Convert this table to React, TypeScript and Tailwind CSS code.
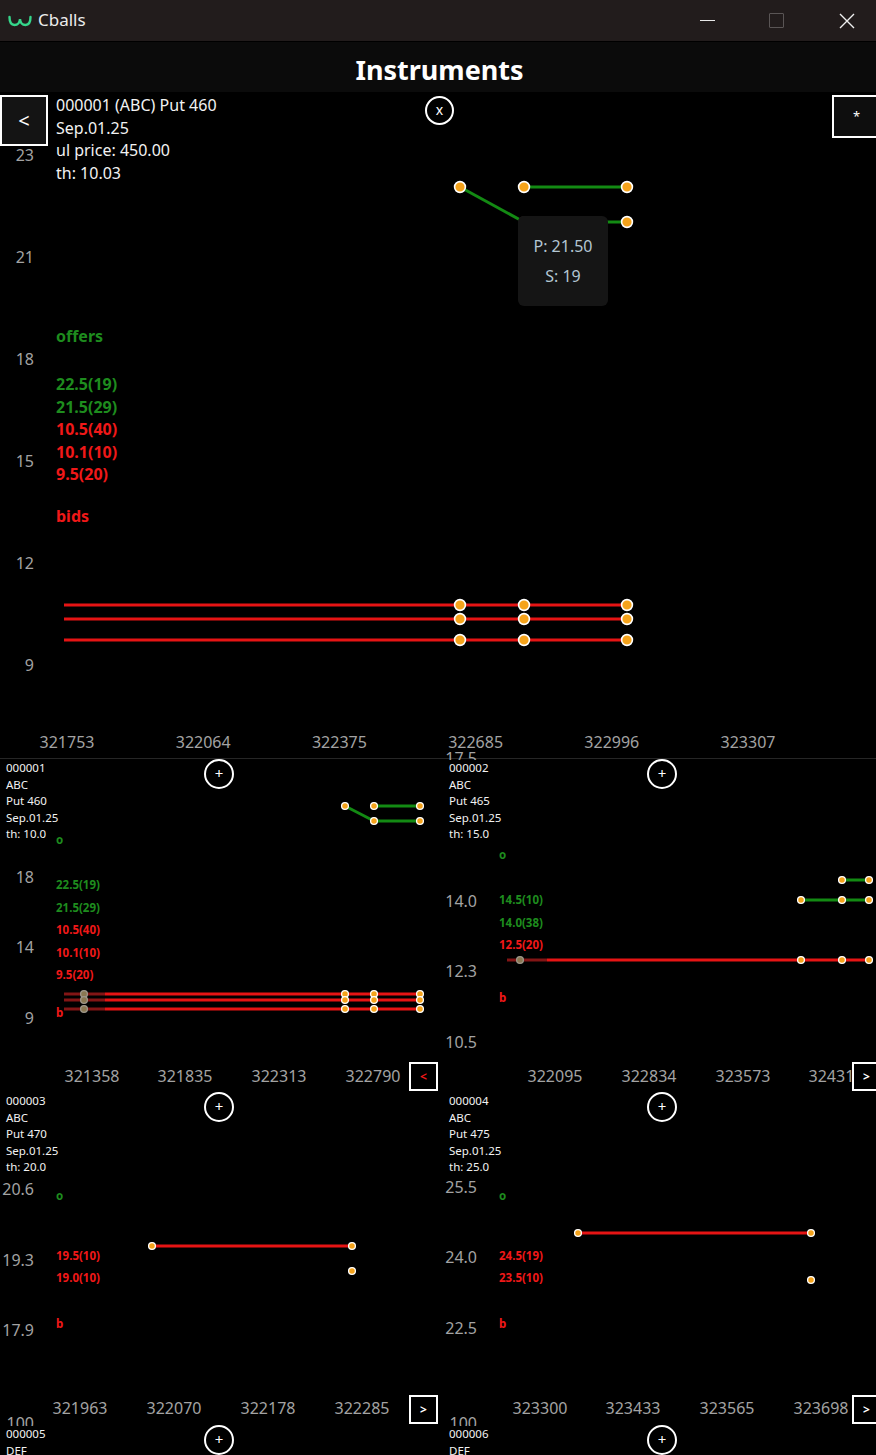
import React from 'react';

type Pt = [number, number];
type Seg = { a: Pt; b: Pt; c: string };
type Txt = { t: string; x: number; y: number; c?: string };

const GREEN_LINE = '#138a13';
const RED_LINE = '#e61414';
const DIM_LINE = '#821515';
const GREEN_TXT = '#1e8c1e';
const RED_TXT = '#f01818';
const AXIS = '#a3a3a3';

interface MiniData {
  info: string[];
  yLabels: Txt[];
  xLabels: Txt[];
  quotes: Txt[];
  segs: Seg[];
  dots: Pt[];
  dimDots?: Pt[];
  nav?: { t: string; red?: boolean };
}

const Dot: React.FC<{ p: Pt; r?: number; dim?: boolean }> = ({ p, r = 3.4, dim }) => (
  <circle
    cx={p[0]}
    cy={p[1]}
    r={r}
    fill={dim ? '#8a7852' : '#f5a31b'}
    stroke={dim ? '#9d978a' : '#ffffff'}
    strokeWidth={r > 4 ? 1.6 : 1.3}
  />
);

const Lines: React.FC<{ segs: Seg[]; w?: number }> = ({ segs, w = 3 }) => (
  <>
    {segs.map((s, i) => (
      <line key={i} x1={s.a[0]} y1={s.a[1]} x2={s.b[0]} y2={s.b[1]} stroke={s.c} strokeWidth={w} />
    ))}
  </>
);

const AxisText: React.FC<{ l: Txt; anchor: 'end' | 'middle' }> = ({ l, anchor }) => (
  <text x={l.x} y={l.y} textAnchor={anchor} dominantBaseline="central" fill={AXIS} fontSize="16">
    {l.t}
  </text>
);

const TitleBar: React.FC = () => (
  <div className="h-[42px] bg-[#221c1c] flex items-center border-b border-black">
    <svg width="24" height="14" viewBox="0 0 24 14" className="ml-[8px]">
      <path
        d="M1.5 3 Q1.5 11 6.5 11 Q11.5 11 12 5 Q12.5 11 17.5 11 Q22.5 11 22.5 3"
        fill="none"
        stroke="#35d68a"
        strokeWidth="2.4"
        strokeLinecap="round"
      />
    </svg>
    <span className="ml-[6px] text-[17px] text-[#ececec] leading-none pb-[2px]">Cballs</span>
    <div className="ml-auto flex items-center pr-[21px]">
      <div className="w-[15px] h-[1.5px] bg-[#e8e8e8]" />
      <div className="ml-[54px] w-[15px] h-[15px] border border-[#5a5555] rounded-[1px]" />
      <svg width="16" height="16" viewBox="0 0 16 16" className="ml-[55px]">
        <path d="M1 1 L15 15 M15 1 L1 15" stroke="#f0f0f0" strokeWidth="1.4" />
      </svg>
    </div>
  </div>
);

const MainChart: React.FC = () => {
  const yLabels: Txt[] = [
    { t: '23', x: 34, y: 63 },
    { t: '21', x: 34, y: 165 },
    { t: '18', x: 34, y: 267 },
    { t: '15', x: 34, y: 369 },
    { t: '12', x: 34, y: 471 },
    { t: '9', x: 34, y: 573 },
  ];
  const xLabels: Txt[] = ['321753', '322064', '322375', '322685', '322996', '323307'].map((t, i) => ({
    t,
    x: 67 + i * 136.2,
    y: 650,
  }));
  const quotes: Txt[] = [
    { t: 'offers', x: 56, y: 244, c: GREEN_TXT },
    { t: '22.5(19)', x: 56, y: 292, c: GREEN_TXT },
    { t: '21.5(29)', x: 56, y: 315, c: GREEN_TXT },
    { t: '10.5(40)', x: 56, y: 337, c: RED_TXT },
    { t: '10.1(10)', x: 56, y: 360, c: RED_TXT },
    { t: '9.5(20)', x: 56, y: 382, c: RED_TXT },
    { t: 'bids', x: 56, y: 424, c: RED_TXT },
  ];
  const redY = [513, 527, 548];
  const segs: Seg[] = [
    { a: [460, 95], b: [524, 130], c: GREEN_LINE },
    { a: [524, 95], b: [627, 95], c: GREEN_LINE },
    { a: [524, 130], b: [627, 130], c: GREEN_LINE },
    ...redY.map((y) => ({ a: [64, y] as Pt, b: [627, y] as Pt, c: RED_LINE })),
  ];
  const dots: Pt[] = [
    [460, 95],
    [524, 95],
    [627, 95],
    [627, 130],
    ...redY.flatMap((y) => [[460, y], [524, y], [627, y]] as Pt[]),
  ];

  return (
    <div className="relative h-[666px] bg-black overflow-hidden">
      <svg width="876" height="666" className="absolute left-0 top-0">
        {yLabels.map((l) => (
          <AxisText key={l.t} l={l} anchor="end" />
        ))}
        {xLabels.map((l) => (
          <AxisText key={l.t} l={l} anchor="middle" />
        ))}
        {quotes.map((q) => (
          <text key={q.t} x={q.x} y={q.y} dominantBaseline="central" fill={q.c} fontSize="16" fontWeight="700">
            {q.t}
          </text>
        ))}
        <Lines segs={segs} />
        {dots.map((p, i) => (
          <Dot key={i} p={p} r={5.4} />
        ))}
        <circle cx={524} cy={130} r={6} fill="#29241f" />
      </svg>

      {/* top controls row */}
      <div className="relative w-[880px] flex items-start">
        <button className="mt-[3px] w-[48px] h-[51px] border-2 border-white bg-[#141414] text-white text-[20px] flex items-center justify-center">
          &lt;
        </button>
        <div className="ml-[8px] w-[369px] pt-[2px] text-[16px] leading-[22.7px] text-[#f2f2f2]">
          <div>000001 (ABC) Put 460</div>
          <div>Sep.01.25</div>
          <div>ul price: 450.00</div>
          <div>th: 10.03</div>
        </div>
        <button className="mt-[4px] w-[29px] h-[29px] rounded-full border-2 border-white bg-black text-white text-[14px] leading-none flex items-center justify-center pb-[2px]">
          x
        </button>
        <button className="ml-auto mt-[3px] w-[48px] h-[43px] border-2 border-white bg-[#0e0e0e] text-white text-[13px] flex items-start pl-[19px] pt-[10px]">
          *
        </button>
      </div>

      {/* tooltip */}
      <div className="absolute left-[518px] top-[124px] w-[90px] h-[90px] rounded-[6px] bg-[#151515] text-[#b3c6d3] text-[16px] leading-[30px] pt-[15px] flex flex-col items-center">
        <div>P: 21.50</div>
        <div>S: 19</div>
      </div>
    </div>
  );
};

const MiniChart: React.FC<{ d: MiniData }> = ({ d }) => (
  <div className="relative h-[333px]">
    <svg width="438" height="333" className="absolute left-0 top-0 overflow-visible">
      {d.yLabels.map((l) => (
        <AxisText key={l.t} l={l} anchor="end" />
      ))}
      {/* labels at the very top sit under the info block */}
      <rect x={0} y={1} width={60} height={86} fill="#000" />
      {d.xLabels.map((l) => (
        <AxisText key={l.t} l={l} anchor="middle" />
      ))}
      {d.quotes.map((q, i) => (
        <text key={i} x={q.x} y={q.y} dominantBaseline="central" fill={q.c} fontSize="11.5" fontWeight="700">
          {q.t}
        </text>
      ))}
      <Lines segs={d.segs} />
      {d.dimDots?.map((p, i) => (
        <Dot key={'d' + i} p={p} dim />
      ))}
      {d.dots.map((p, i) => (
        <Dot key={i} p={p} />
      ))}
    </svg>

    <div className="relative h-full flex flex-col">
      <div className="flex items-start">
        <div className="w-[204px] pl-[6px] pt-[1px] text-[11.5px] leading-[16.5px] text-[#f2f2f2]">
          {d.info.map((line) => (
            <div key={line}>{line}</div>
          ))}
        </div>
        <button className="w-[30px] h-[30px] rounded-full border-2 border-white bg-black text-white text-[15px] leading-none flex items-center justify-center pb-[1px]">
          +
        </button>
      </div>
      {d.nav && (
        <button
          className={`mt-auto mb-[1px] self-end w-[29px] h-[29px] border-2 border-white bg-black text-[12px] font-bold flex items-center justify-center ${
            d.nav.red ? 'text-[#f01818]' : 'text-white'
          }`}
        >
          {d.nav.t}
        </button>
      )}
    </div>
  </div>
);

const xs = (labels: [string, number][], y: number): Txt[] => labels.map(([t, x]) => ({ t, x, y }));
const ys = (labels: [string, number][]): Txt[] => labels.map(([t, y]) => ({ t, x: 34, y }));
const qs = (labels: [string, number, string][]): Txt[] => labels.map(([t, y, c]) => ({ t, x: 56, y, c }));

const cells: MiniData[] = [
  {
    info: ['000001', 'ABC', 'Put 460', 'Sep.01.25', 'th: 10.0'],
    yLabels: ys([
      ['18', 118],
      ['14', 188],
      ['9', 259],
    ]),
    xLabels: xs(
      [
        ['321358', 92],
        ['321835', 185],
        ['322313', 279],
        ['322790', 373],
      ],
      317,
    ),
    quotes: qs([
      ['o', 80, GREEN_TXT],
      ['22.5(19)', 125, GREEN_TXT],
      ['21.5(29)', 148, GREEN_TXT],
      ['10.5(40)', 170, RED_TXT],
      ['10.1(10)', 193, RED_TXT],
      ['9.5(20)', 215, RED_TXT],
      ['b', 253, RED_TXT],
    ]),
    segs: [
      { a: [345, 47], b: [374, 62], c: GREEN_LINE },
      { a: [374, 47], b: [420, 47], c: GREEN_LINE },
      { a: [374, 62], b: [420, 62], c: GREEN_LINE },
      ...[235, 241, 250].flatMap((y) => [
        { a: [105, y] as Pt, b: [420, y] as Pt, c: RED_LINE },
        { a: [64, y] as Pt, b: [105, y] as Pt, c: DIM_LINE },
      ]),
    ],
    dots: [
      [345, 47],
      [374, 47],
      [420, 47],
      [374, 62],
      [420, 62],
      ...[235, 241, 250].flatMap((y) => [[345, y], [374, y], [420, y]] as Pt[]),
    ],
    dimDots: [
      [84, 235],
      [84, 241],
      [84, 250],
    ],
    nav: { t: '<', red: true },
  },
  {
    info: ['000002', 'ABC', 'Put 465', 'Sep.01.25', 'th: 15.0'],
    yLabels: ys([
      ['17.5', -1],
      ['14.0', 142],
      ['12.3', 212],
      ['10.5', 283],
    ]),
    xLabels: xs(
      [
        ['322095', 112],
        ['322834', 206],
        ['323573', 300],
        ['324312', 393],
      ],
      317,
    ),
    quotes: qs([
      ['o', 95, GREEN_TXT],
      ['14.5(10)', 140, GREEN_TXT],
      ['14.0(38)', 163, GREEN_TXT],
      ['12.5(20)', 185, RED_TXT],
      ['b', 238, RED_TXT],
    ]),
    segs: [
      { a: [399, 121], b: [426, 121], c: GREEN_LINE },
      { a: [358, 141], b: [426, 141], c: GREEN_LINE },
      { a: [104, 201], b: [426, 201], c: RED_LINE },
      { a: [64, 201], b: [104, 201], c: DIM_LINE },
    ],
    dots: [
      [399, 121],
      [426, 121],
      [358, 141],
      [399, 141],
      [426, 141],
      [358, 201],
      [399, 201],
      [426, 201],
    ],
    dimDots: [[77, 201]],
    nav: { t: '>' },
  },
  {
    info: ['000003', 'ABC', 'Put 470', 'Sep.01.25', 'th: 20.0'],
    yLabels: ys([
      ['20.6', 97],
      ['19.3', 168],
      ['17.9', 238],
    ]),
    xLabels: xs(
      [
        ['321963', 80],
        ['322070', 174],
        ['322178', 268],
        ['322285', 362],
      ],
      316,
    ),
    quotes: qs([
      ['o', 103, GREEN_TXT],
      ['19.5(10)', 163, RED_TXT],
      ['19.0(10)', 185, RED_TXT],
      ['b', 231, RED_TXT],
    ]),
    segs: [{ a: [152, 154], b: [352, 154], c: RED_LINE }],
    dots: [
      [152, 154],
      [352, 154],
      [352, 179],
    ],
    nav: { t: '>' },
  },
  {
    info: ['000004', 'ABC', 'Put 475', 'Sep.01.25', 'th: 25.0'],
    yLabels: ys([
      ['25.5', 95],
      ['24.0', 165],
      ['22.5', 236],
    ]),
    xLabels: xs(
      [
        ['323300', 97],
        ['323433', 190],
        ['323565', 284],
        ['323698', 378],
      ],
      316,
    ),
    quotes: qs([
      ['o', 103, GREEN_TXT],
      ['24.5(19)', 163, RED_TXT],
      ['23.5(10)', 185, RED_TXT],
      ['b', 231, RED_TXT],
    ]),
    segs: [{ a: [135, 141], b: [368, 141], c: RED_LINE }],
    dots: [
      [135, 141],
      [368, 141],
      [368, 188],
    ],
    nav: { t: '>' },
  },
  {
    info: ['000005', 'DEF', 'Put 120', 'Sep.01.25', 'th: 5.0'],
    yLabels: ys([['100', -2]]),
    xLabels: [],
    quotes: [],
    segs: [],
    dots: [],
  },
  {
    info: ['000006', 'DEF', 'Put 125', 'Sep.01.25', 'th: 5.0'],
    yLabels: ys([['100', -2]]),
    xLabels: [],
    quotes: [],
    segs: [],
    dots: [],
  },
];

const App: React.FC = () => (
  <div className="w-[876px] h-[1455px] overflow-hidden bg-black text-white font-['Noto_Sans',sans-serif]">
    <TitleBar />
    <div className="h-[50px] bg-[#0b0b0b] flex items-center justify-center">
      <h1 className="text-[27px] font-bold text-white leading-none pl-[3px] pt-[4px]">Instruments</h1>
    </div>
    <MainChart />
    <div className="w-[881px] grid grid-cols-[438px_438px] gap-x-[5px] border-t border-[#262626]">
      {cells.map((c, i) => (
        <MiniChart key={i} d={c} />
      ))}
    </div>
  </div>
);

export default App;
